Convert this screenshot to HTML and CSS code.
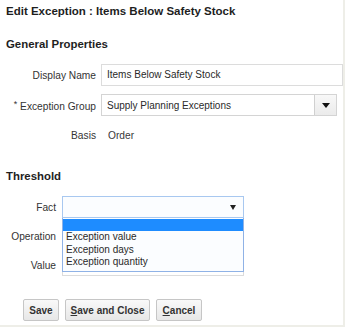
FILE: index.html
```html
<!DOCTYPE html>
<html>
<head>
<meta charset="utf-8">
<link rel="stylesheet" href="styles.css">
</head>
<body>
<div class="panel">
  <div class="title">Edit Exception : Items Below Safety Stock</div>
  <div class="section-head general">General Properties</div>
  <div class="form general-form">
    <div class="label">Display Name</div>
    <div class="input wide">Items Below Safety Stock</div>
    <div class="label"><span class="req">*</span> Exception Group</div>
    <div class="select group">
      <span class="select-text">Supply Planning Exceptions</span>
      <span class="select-btn"><span class="tri big"></span></span>
    </div>
    <div class="label">Basis</div>
    <div class="value">Order</div>
  </div>
  <div class="section-head threshold">Threshold</div>
  <div class="form threshold-form">
    <div class="label">Fact</div>
    <div class="fact-wrap">
      <div class="select fact"><span class="tri small"></span></div>
      <div class="dropdown">
        <div class="opt selected"></div>
        <div class="opt">Exception value</div>
        <div class="opt">Exception days</div>
        <div class="opt">Exception quantity</div>
      </div>
    </div>
    <div class="label">Operation</div>
    <div class="input mid"></div>
    <div class="label">Value</div>
    <div class="input mid"></div>
  </div>
  <div class="buttons">
    <button class="btn save">Save</button>
    <button class="btn sac"><u>S</u>ave and Close</button>
    <button class="btn cancel"><u>C</u>ancel</button>
  </div>
</div>
</body>
</html>
```
FILE: styles.css
```css
html, body {
  margin: 0;
  padding: 0;
  background: #ffffff;
}
body {
  font-family: "Liberation Sans", Arial, sans-serif;
  color: #333333;
}
.panel {
  width: 343px;
  height: 325px;
  border-right: 2px solid #eeeee8;
  border-bottom: 2px solid #eeeee8;
  display: flex;
  flex-direction: column;
  position: relative;
}
.title {
  margin-top: 3px;
  height: 16px;
  line-height: 16px;
  padding-left: 6px;
  font-size: 11.5px;
  font-weight: bold;
  color: #1e1e1e;
}
.section-head {
  height: 16px;
  line-height: 16px;
  padding-left: 6px;
  font-size: 11.4px;
  font-weight: bold;
  color: #1e1e1e;
}
.general { margin-top: 17px; }
.threshold { margin-top: 22px; }
.form {
  display: grid;
  align-items: center;
}
.general-form {
  margin-top: 12px;
  grid-template-columns: 96px 242px;
  column-gap: 5px;
  grid-template-rows: 22px 22px 22px;
  row-gap: 8px;
}
.threshold-form {
  margin-top: 12px;
  grid-template-columns: 56px 182px;
  column-gap: 6px;
  grid-template-rows: 22px 22px 22px;
  row-gap: 7px;
}
.label {
  text-align: right;
  font-size: 10.2px;
  color: #333333;
  white-space: nowrap;
}
.req {
  font-size: 9px;
  vertical-align: 3px;
  color: #333;
}
.value {
  padding-left: 7px;
  font-size: 10.2px;
  color: #3a3a3a;
}
.input {
  height: 22px;
  box-sizing: border-box;
  border: 1px solid #dcdcdc;
  background: #fff;
  font-size: 10px;
  line-height: 20px;
  padding-left: 5px;
  color: #2a2a2a;
}
.select {
  height: 22px;
  box-sizing: border-box;
  border: 1px solid #d4d4d4;
  background: #fff;
  display: flex;
  align-items: center;
}
.select.group {
  width: 236px;
  font-size: 10px;
  color: #2a2a2a;
}
.select-text {
  flex: 1;
  padding-left: 5px;
}
.select-btn {
  width: 21px;
  height: 20px;
  border-left: 1px solid #d0d0d0;
  background: linear-gradient(#f8f8f8, #ebebeb);
  display: flex;
  align-items: center;
  justify-content: center;
}
.tri {
  width: 0;
  height: 0;
  border-left-style: solid;
  border-right-style: solid;
  border-top-style: solid;
  border-left-color: transparent;
  border-right-color: transparent;
  border-top-color: #111;
}
.tri.big {
  border-left-width: 4px;
  border-right-width: 4px;
  border-top-width: 5px;
}
.tri.small {
  border-left-width: 3px;
  border-right-width: 3px;
  border-top-width: 5px;
  border-top-color: #222;
}
.fact-wrap {
  position: relative;
  height: 22px;
}
.select.fact {
  border-color: #a8c8f0;
  background: #fbfdff;
  justify-content: flex-end;
  padding-right: 7px;
}
.dropdown {
  position: absolute;
  left: 0;
  top: 22px;
  width: 182px;
  box-sizing: border-box;
  border: 1px solid #8fb2e6;
  border-top: none;
  background: #fbfdff;
  z-index: 2;
  padding-bottom: 2px;
}
.opt {
  height: 12.5px;
  line-height: 12.5px;
  font-size: 10px;
  padding-left: 3px;
  color: #2a2a2a;
}
.opt.selected {
  height: 12px;
  background: #1e8cff;
  margin-top: 1px;
}
.input.mid {
  width: 182px;
}
.buttons {
  margin-top: 23px;
  padding-left: 23px;
  display: flex;
  gap: 6px;
}
.btn {
  height: 22px;
  margin: 0;
  padding: 0;
  border: 1px solid #c6c6c6;
  border-radius: 2px;
  background: linear-gradient(#f9f9f9, #e7e7e7);
  font-family: "Liberation Sans", Arial, sans-serif;
  font-size: 10px;
  font-weight: bold;
  color: #333;
}
.btn.save { width: 36px; }
.btn.sac { width: 85px; }
.btn.cancel { width: 46px; }
```
